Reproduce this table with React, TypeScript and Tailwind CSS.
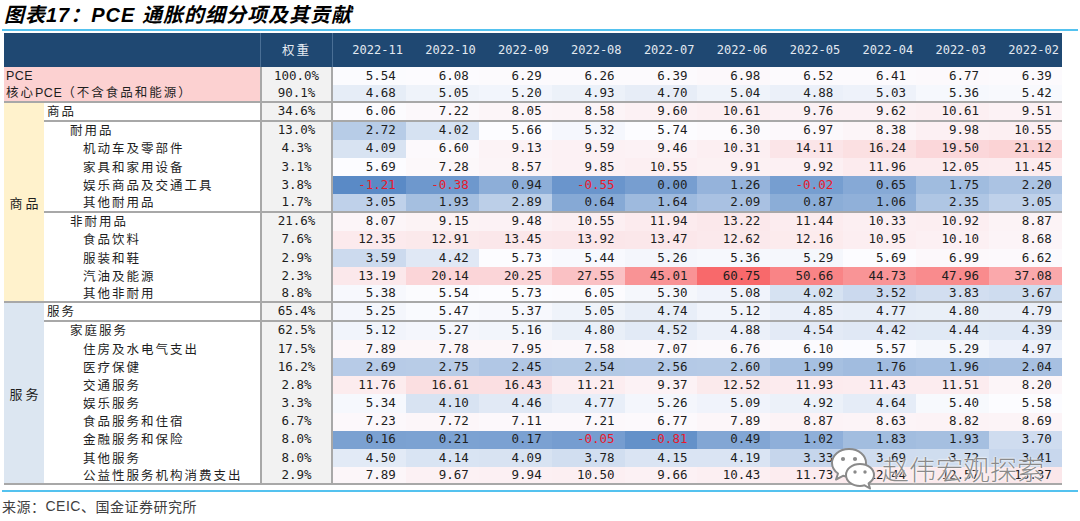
import React from "react";

type Row = { label: string; indent: number; weight: string; vals: number[]; pink?: boolean; line?: boolean };

const COLS = ["2022-11", "2022-10", "2022-09", "2022-08", "2022-07", "2022-06", "2022-05", "2022-04", "2022-03", "2022-02"];

const ROWS: Row[] = [
  { label: "PCE", indent: 0, weight: "100.0%", pink: true, vals: [5.54, 6.08, 6.29, 6.26, 6.39, 6.98, 6.52, 6.41, 6.77, 6.39] },
  { label: "核心PCE（不含食品和能源）", indent: 0, weight: "90.1%", pink: true, line: true, vals: [4.68, 5.05, 5.2, 4.93, 4.7, 5.04, 4.88, 5.03, 5.36, 5.42] },
  { label: "商品", indent: 1, weight: "34.6%", line: true, vals: [6.06, 7.22, 8.05, 8.58, 9.6, 10.61, 9.76, 9.62, 10.61, 9.51] },
  { label: "耐用品", indent: 2, weight: "13.0%", vals: [2.72, 4.02, 5.66, 5.32, 5.74, 6.3, 6.97, 8.38, 9.98, 10.55] },
  { label: "机动车及零部件", indent: 3, weight: "4.3%", vals: [4.09, 6.6, 9.13, 9.59, 9.46, 10.31, 14.11, 16.24, 19.5, 21.12] },
  { label: "家具和家用设备", indent: 3, weight: "3.1%", vals: [5.69, 7.28, 8.57, 9.85, 10.55, 9.91, 9.92, 11.96, 12.05, 11.45] },
  { label: "娱乐商品及交通工具", indent: 3, weight: "3.8%", vals: [-1.21, -0.38, 0.94, -0.55, 0.0, 1.26, -0.02, 0.65, 1.75, 2.2] },
  { label: "其他耐用品", indent: 3, weight: "1.7%", line: true, vals: [3.05, 1.93, 2.89, 0.64, 1.64, 2.09, 0.87, 1.06, 2.35, 3.05] },
  { label: "非耐用品", indent: 2, weight: "21.6%", vals: [8.07, 9.15, 9.48, 10.55, 11.94, 13.22, 11.44, 10.33, 10.92, 8.87] },
  { label: "食品饮料", indent: 3, weight: "7.6%", vals: [12.35, 12.91, 13.45, 13.92, 13.47, 12.62, 12.16, 10.95, 10.1, 8.68] },
  { label: "服装和鞋", indent: 3, weight: "2.9%", vals: [3.59, 4.42, 5.73, 5.44, 5.26, 5.36, 5.29, 5.69, 6.99, 6.62] },
  { label: "汽油及能源", indent: 3, weight: "2.3%", vals: [13.19, 20.14, 20.25, 27.55, 45.01, 60.75, 50.66, 44.73, 47.96, 37.08] },
  { label: "其他非耐用", indent: 3, weight: "8.8%", line: true, vals: [5.38, 5.54, 5.73, 6.05, 5.3, 5.08, 4.02, 3.52, 3.83, 3.67] },
  { label: "服务", indent: 1, weight: "65.4%", line: true, vals: [5.25, 5.47, 5.37, 5.05, 4.74, 5.12, 4.85, 4.77, 4.8, 4.79] },
  { label: "家庭服务", indent: 2, weight: "62.5%", vals: [5.12, 5.27, 5.16, 4.8, 4.52, 4.88, 4.54, 4.42, 4.44, 4.39] },
  { label: "住房及水电气支出", indent: 3, weight: "17.5%", vals: [7.89, 7.78, 7.95, 7.58, 7.07, 6.76, 6.1, 5.57, 5.29, 4.97] },
  { label: "医疗保健", indent: 3, weight: "16.2%", vals: [2.69, 2.75, 2.45, 2.54, 2.56, 2.6, 1.99, 1.76, 1.96, 2.04] },
  { label: "交通服务", indent: 3, weight: "2.8%", vals: [11.76, 16.61, 16.43, 11.21, 9.37, 12.52, 11.93, 11.43, 11.51, 8.2] },
  { label: "娱乐服务", indent: 3, weight: "3.3%", vals: [5.34, 4.1, 4.46, 4.77, 5.26, 5.09, 4.92, 4.64, 5.4, 5.58] },
  { label: "食品服务和住宿", indent: 3, weight: "6.7%", vals: [7.23, 7.72, 7.11, 7.21, 6.77, 7.89, 8.87, 8.63, 8.82, 8.69] },
  { label: "金融服务和保险", indent: 3, weight: "8.0%", vals: [0.16, 0.21, 0.17, -0.05, -0.81, 0.49, 1.02, 1.83, 1.93, 3.7] },
  { label: "其他服务", indent: 3, weight: "8.0%", vals: [4.5, 4.14, 4.09, 3.78, 4.15, 4.19, 3.33, 3.69, 3.72, 3.41] },
  { label: "公益性服务机构消费支出", indent: 3, weight: "2.9%", line: true, vals: [7.89, 9.67, 9.94, 10.5, 9.66, 10.43, 11.73, 12.44, 12.57, 13.37] },
];

const INDENT = ["pl-[2px]", "pl-[3px]", "pl-[26px]", "pl-[39px]"];
const LINE = "border-b-2 border-b-[#a8a8a8]";
const CJK = "font-['Noto_Sans_CJK_SC',sans-serif]";
const MONO = "font-['DejaVu_Sans_Mono',monospace]";

function mix(a: number[], b: number[], t: number) {
  const c = a.map((x, i) => Math.round(x + (b[i] - x) * t));
  return `rgb(${c[0]},${c[1]},${c[2]})`;
}

function heat(v: number) {
  const min = -1.21;
  const mid = 5.6;
  const max = 60.75;
  const white = [252, 252, 255];
  if (v <= mid) {
    const t = Math.min(1, (mid - v) / (mid - min));
    return mix(white, [90, 138, 198], t);
  }
  const t = Math.min(1, (v - mid) / (max - mid));
  return mix(white, [248, 105, 107], t);
}

function Label({ text }: { text: string }) {
  if (text.startsWith("核心PCE")) {
    return (
      <span className="tracking-[2px]">
        核心<span className="tracking-[0.5px] font-['Liberation_Sans',sans-serif]">PCE</span>（不含食品和能源）
      </span>
    );
  }
  if (text === "PCE") {
    return <span className="tracking-[0.5px] font-['Liberation_Sans',sans-serif]">PCE</span>;
  }
  return <span className="tracking-[2px]">{text}</span>;
}

function WeChat() {
  return (
    <svg width="48" height="46" viewBox="0 0 48 46" className="absolute left-[829px] top-[446px]">
      <g fill="#fff" stroke="#8a8a8a" strokeWidth="2" strokeLinejoin="round">
        <path d="M20 3 C10 3 3 9.5 3 17 C3 21.5 5.5 25 9 27.5 L7 33.5 L14 29.8 C16 30.4 18 30.8 20 30.8 C30 30.8 37 24.5 37 17 C37 9.5 30 3 20 3 Z" />
        <path d="M31 18 C23 18 17 23 17 29 C17 35 23 40 31 40 C32.6 40 34.2 39.8 35.6 39.3 L41 42.5 L39.6 37.4 C42.8 35.3 45 32.3 45 29 C45 23 39 18 31 18 Z" />
      </g>
      <g fill="#8a8a8a">
        <circle cx="14" cy="13" r="2.1" />
        <circle cx="26" cy="13" r="2.1" />
        <circle cx="26" cy="26" r="1.7" />
        <circle cx="36" cy="26" r="1.7" />
      </g>
    </svg>
  );
}

export default function App() {
  return (
    <div className="relative w-[1080px] h-[521px] overflow-hidden bg-white text-[#1e1e1e]">
      <div className="h-[29px] pl-[4px] flex items-center">
        <span className="text-[20px] font-bold italic tracking-[1px] leading-[28px] text-black font-['Liberation_Sans','Noto_Sans_CJK_SC',sans-serif]">
          图表17：PCE 通胀的细分项及其贡献
        </span>
      </div>
      <div className="h-[2px] mx-[2px] bg-[#54c2ef]" />
      <div className="h-[2px]" />
      <div className="ml-[4px] w-[1058px] grid grid-cols-[40px_216px_73px_repeat(10,72.9px)] grid-rows-[34px_repeat(23,18.2px)]">
        <div className="col-span-2 bg-[#1f4872]" />
        <div className={`bg-[#1f4872] border-x border-x-[#4a6f95] flex items-center justify-center text-[12.5px] tracking-[2px] text-[#e4eaf1] ${CJK}`}>
          权重
        </div>
        {COLS.map((c) => (
          <div key={c} className={`bg-[#1f4872] flex items-center justify-end pr-[3px] text-[12px] text-[#e4eaf1] ${MONO}`}>
            {c}
          </div>
        ))}

        <div className={`[grid-column:1] [grid-row:4/15] bg-[#fff2cc] flex items-center justify-center text-[13px] tracking-[3px] pl-[3px] ${CJK} ${LINE}`}>
          商品
        </div>
        <div className={`[grid-column:1] [grid-row:15/25] bg-[#dce6f1] flex items-center justify-center text-[13px] tracking-[3px] pl-[3px] ${CJK} ${LINE}`}>
          服务
        </div>

        {ROWS.map((r) => (
          <React.Fragment key={r.label}>
            <div
              className={`flex items-center text-[12.5px] whitespace-nowrap ${CJK} ${INDENT[r.indent]} ${r.pink ? "col-span-2 bg-[#fcd1d1]" : "bg-white"} ${r.line ? LINE : ""}`}
            >
              <Label text={r.label} />
            </div>
            <div
              className={`flex items-center justify-center bg-[#f2f2f2] border-x-2 border-x-[#a8a8a8] text-[12.5px] ${MONO} ${r.line ? LINE : ""}`}
            >
              {r.weight}
            </div>
            {r.vals.map((v, i) => (
              <div
                key={i}
                style={{ backgroundColor: heat(v) }}
                className={`flex items-center justify-end pr-[10px] text-[12.5px] ${MONO} ${v < 0 ? "text-[#e8192c]" : "text-[#1e1e1e]"} ${r.line ? LINE : ""}`}
              >
                {v.toFixed(2)}
              </div>
            ))}
          </React.Fragment>
        ))}
      </div>
      <div className="h-[5px]" />
      <div className="h-[2px] mx-[2px] bg-[#54c2ef]" />
      <div className={`h-[28px] pl-[2px] flex items-center text-[14px] tracking-[0.5px] text-[#404040] ${CJK}`}>
        来源：<span className="font-['Liberation_Sans',sans-serif]">CEIC</span>、国金证券研究所
      </div>

      <WeChat />
      <div
        className={`absolute left-[882px] top-[449px] text-[27px] leading-[40px] font-light text-[#8a8a8a] [text-shadow:0_0_2px_#fff,0_0_2px_#fff] ${CJK}`}
      >
        赵伟宏观探索
      </div>
    </div>
  );
}
